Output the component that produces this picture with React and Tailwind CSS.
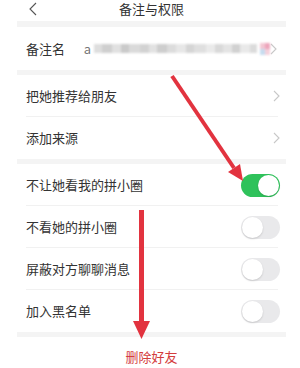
import React from 'react';

function Toggle({ on }) {
  return (
    <div
      className={
        'w-[39px] h-[23px] rounded-full p-[1px] flex items-center ' +
        (on ? 'bg-[#2fc25b] justify-end' : 'bg-[#e9e9eb] justify-start')
      }
    >
      <div className="w-[21px] h-[21px] rounded-full bg-white shadow-[0_1px_2px_rgba(0,0,0,0.15)]"></div>
    </div>
  );
}

function Chevron() {
  return (
    <svg width="7" height="12" viewBox="0 0 7 12" fill="none">
      <path d="M1 1 L6 6 L1 11" stroke="#c8c8c8" strokeWidth="1.1" />
    </svg>
  );
}

function Row({ label, children, divider }) {
  return (
    <div className="h-[42px] pl-[9px] pr-[6px] flex items-center relative">
      <span className="text-[13px] text-[#333]">{label}</span>
      <div className="ml-auto flex items-center">{children}</div>
      {divider && <div className="absolute left-[9px] right-[8px] bottom-0 h-px bg-[#f1f1f1]"></div>}
    </div>
  );
}

const blurBlocks = [
  ['#d6d6d6', 8], ['#c4c4c4', 10], ['#dadada', 9], ['#bdbdbd', 8], ['#d2d2d2', 11],
  ['#c8c8c8', 9], ['#dcdcdc', 8], ['#c2c2c2', 10], ['#d4d4d4', 9], ['#e2e2e2', 10],
  ['#cbcbcb', 8], ['#d8d8d8', 12], ['#e6e6e6', 9], ['#d0d0d0', 8], ['#dedede', 9],
  ['#c6c6c6', 8], ['#e4e4e4', 10], ['#d3d3d3', 7],
];

export default function App() {
  return (
    <div
      className="w-[300px] h-[368px] bg-white overflow-hidden relative"
      style={{ fontFamily: '"Noto Sans CJK SC", "Noto Sans", sans-serif' }}
    >
      <div className="ml-[17px] w-[269px]">
        <div className="h-[21px] relative flex items-center justify-center">
          <svg className="absolute left-[11px] top-[2px]" width="10" height="14" viewBox="0 0 10 14" fill="none">
            <path d="M8 1 L2 7 L8 13" stroke="#555" strokeWidth="1.1" />
          </svg>
          <span className="text-[13px] text-[#333] leading-none -mt-[4px]">备注与权限</span>
        </div>
        <div className="h-[6px] bg-[#f4f4f4]"></div>

        <div className="h-[43px] pl-[9px] pr-[9px] flex items-center">
          <span className="text-[13px] text-[#333] w-[60px]">备注名</span>
          <span className="text-[13px] text-[#777] mr-[3px]">a</span>
          <div className="flex items-center blur-[0.8px] opacity-80">
            {blurBlocks.map(([c, w], i) => (
              <div key={i} className="h-[9px]" style={{ background: c, width: w }}></div>
            ))}
            <div className="ml-[3px] grid grid-cols-2 w-[10px] h-[12px]">
              <div className="bg-[#f0b8c8]"></div>
              <div className="bg-[#e98fab]"></div>
              <div className="bg-[#b8d4ec]"></div>
              <div className="bg-[#f3c6d3]"></div>
            </div>
          </div>
          <div className="ml-auto">
            <Chevron />
          </div>
        </div>
        <div className="h-[5px] bg-[#f4f4f4]"></div>

        <Row label="把她推荐给朋友" divider>
          <Chevron />
        </Row>
        <Row label="添加来源">
          <Chevron />
        </Row>
        <div className="h-[5px] bg-[#f4f4f4]"></div>

        <Row label="不让她看我的拼小圈" divider>
          <Toggle on />
        </Row>
        <Row label="不看她的拼小圈" divider>
          <Toggle />
        </Row>
        <Row label="屏蔽对方聊聊消息" divider>
          <Toggle />
        </Row>
        <Row label="加入黑名单">
          <Toggle />
        </Row>
        <div className="h-[5px] bg-[#f4f4f4]"></div>

        <div className="h-[40px] flex items-center justify-center">
          <span className="text-[13px] text-[#d43d3d]">删除好友</span>
        </div>
      </div>

      <svg className="absolute left-0 top-0" width="300" height="368" viewBox="0 0 300 368">
        <line x1="172" y1="76" x2="234" y2="168" stroke="#e2333f" strokeWidth="4" />
        <polygon points="228,172 240,164 243,181" fill="#e2333f" />
        <rect x="139" y="210" width="5" height="113" fill="#e2333f" />
        <polygon points="133,321 150,321 141.5,339" fill="#e2333f" />
      </svg>
    </div>
  );
}
